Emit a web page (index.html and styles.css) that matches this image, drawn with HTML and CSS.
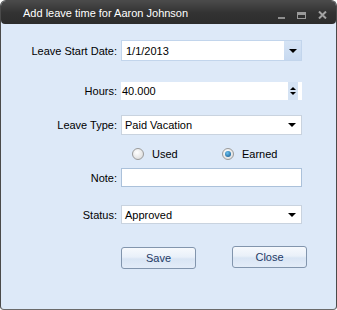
FILE: index.html
```html
<!DOCTYPE html>
<html lang="en">
<head>
    <meta charset="UTF-8">
    <title>Add leave time</title>
    <link rel="stylesheet" href="styles.css">
</head>
<body>
    <div class="window">
        <div class="titlebar">
            <span class="title">Add leave time for Aaron Johnson</span>
            <div class="controls">
                <span class="ctl-min"></span>
                <span class="ctl-max"></span>
                <svg class="ctl-close" width="9" height="8" viewBox="0 0 9 8">
                    <path d="M1 0.5 L8 7.5 M8 0.5 L1 7.5" stroke="#a3a3a3" stroke-width="2" fill="none"/>
                </svg>
            </div>
        </div>
        <form class="form">
            <div class="row row-date">
                <label class="label">Leave Start Date:</label>
                <div class="field field-date">
                    <span class="value">1/1/2013</span>
                    <span class="drop-btn"><span class="arrow"></span></span>
                </div>
            </div>
            <div class="row row-hours">
                <label class="label">Hours:</label>
                <div class="field field-hours">
                    <span class="value">40.000</span>
                    <span class="spin-btn">
                        <span class="arrow-up"></span>
                        <span class="arrow"></span>
                    </span>
                </div>
            </div>
            <div class="row row-type">
                <label class="label">Leave Type:</label>
                <div class="field field-select">
                    <span class="value">Paid Vacation</span>
                    <span class="arrow"></span>
                </div>
            </div>
            <div class="row row-radios">
                <span class="label"></span>
                <div class="radios">
                    <span class="radio-opt"><span class="radio"></span>Used</span>
                    <span class="radio-opt"><span class="radio checked"></span>Earned</span>
                </div>
            </div>
            <div class="row row-note">
                <label class="label">Note:</label>
                <div class="field field-note"></div>
            </div>
            <div class="row row-status">
                <label class="label">Status:</label>
                <div class="field field-select">
                    <span class="value">Approved</span>
                    <span class="arrow"></span>
                </div>
            </div>
            <div class="buttons">
                <button type="button" class="btn btn-save">Save</button>
                <button type="button" class="btn">Close</button>
            </div>
        </form>
    </div>
</body>
</html>
```

FILE: styles.css
```css
body {
    margin: 0;
    padding: 0;
    background-color: #ffffff;
    font-family: "Liberation Sans", Arial, sans-serif;
    font-size: 11px;
    color: #000;
}
.window {
    width: 337px;
    height: 310px;
    box-sizing: border-box;
    border: 1px solid #4a4a4a;
    border-bottom-color: #6a6a6a;
    border-radius: 6px 6px 4px 4px;
    background-color: #dde9f8;
    overflow: hidden;
}
.titlebar {
    height: 23px;
    display: flex;
    align-items: center;
    justify-content: space-between;
    padding: 0 9px 0 22px;
    background: linear-gradient(#4a4a4a, #333333 50%, #2c2c2c);
    border-radius: 0 0 4px 4px;
}
.title {
    color: #ffffff;
    font-size: 11px;
    padding-top: 1px;
}
.controls {
    display: flex;
    align-items: flex-end;
    gap: 12px;
    height: 8px;
    margin-top: 4px;
}
.ctl-min {
    width: 7px;
    height: 2px;
    background-color: #8e8e8e;
}
.ctl-max {
    width: 9px;
    height: 7px;
    box-sizing: border-box;
    border: 1px solid #9a9a9a;
    border-top-width: 3px;
}
.form {
    padding-top: 16px;
}
.row {
    display: flex;
    align-items: center;
    gap: 4px;
}
.label {
    width: 116px;
    text-align: right;
    flex-shrink: 0;
}
.field {
    width: 181px;
    box-sizing: border-box;
    background-color: #ffffff;
    display: flex;
    align-items: center;
}
.value {
    flex: 1;
}
.arrow {
    width: 0;
    height: 0;
    border-left: 4px solid transparent;
    border-right: 4px solid transparent;
    border-top: 4px solid #000;
}
.arrow-up {
    width: 0;
    height: 0;
    border-left: 4px solid transparent;
    border-right: 4px solid transparent;
    border-bottom: 4px solid #000;
}

/* date picker */
.row-date .field {
    height: 21px;
    border: 1px solid #c2d5ec;
    padding-left: 4px;
}
.drop-btn {
    width: 17px;
    height: 100%;
    display: flex;
    align-items: center;
    justify-content: center;
    background: linear-gradient(#d6e4f5, #c7d9f0);
}

/* numeric */
.row-hours {
    margin-top: 21px;
}
.field-hours {
    height: 18px;
    padding-left: 1px;
    padding-right: 4px;
}
.spin-btn {
    width: 10px;
    height: 100%;
    display: flex;
    flex-direction: column;
    align-items: center;
    justify-content: center;
    gap: 2px;
    background-color: #d5e3f4;
}
.spin-btn .arrow,
.spin-btn .arrow-up {
    border-left-width: 3px;
    border-right-width: 3px;
    border-top-width: 3px;
    border-bottom-width: 3px;
}
.spin-btn .arrow {
    border-bottom: 0;
}
.spin-btn .arrow-up {
    border-top: 0;
}

/* combo boxes */
.field-select {
    border: 1px solid #c9d3df;
    padding: 0 5px 0 3px;
}
.row-type {
    margin-top: 15px;
}
.row-type .field {
    height: 20px;
}
.row-status {
    margin-top: 18px;
}
.row-status .field {
    height: 19px;
}

/* radio buttons */
.row-radios {
    margin-top: 12px;
    height: 14px;
}
.radios {
    display: flex;
    padding-left: 11px;
}
.radio-opt {
    width: 90px;
    display: flex;
    align-items: center;
    gap: 8px;
}
.radio {
    width: 12px;
    height: 12px;
    box-sizing: border-box;
    border-radius: 50%;
    border: 1px solid #9a9a9a;
    background: radial-gradient(circle at 40% 35%, #ffffff, #d6d6d6);
    display: flex;
    align-items: center;
    justify-content: center;
}
.radio.checked::after {
    content: "";
    width: 6px;
    height: 6px;
    border-radius: 50%;
    background: radial-gradient(circle at 40% 35%, #6cc2f0, #0b4f88);
}

/* note */
.row-note {
    margin-top: 7px;
}
.field-note {
    height: 19px;
    border: 1px solid #abc1da;
}

/* buttons */
.buttons {
    display: flex;
    align-items: flex-start;
    gap: 36px;
    padding-left: 120px;
    margin-top: 22px;
}
.btn {
    width: 75px;
    height: 22px;
    border: 1px solid #8295ad;
    border-radius: 3px;
    background: linear-gradient(#f6f9fd, #e9f0f9 45%, #d9e5f4 55%, #e3ecf8);
    color: #1e3a66;
    font-family: "Liberation Sans", Arial, sans-serif;
    font-size: 11px;
    padding: 0;
}
.btn-save {
    margin-top: 1px;
}
```
